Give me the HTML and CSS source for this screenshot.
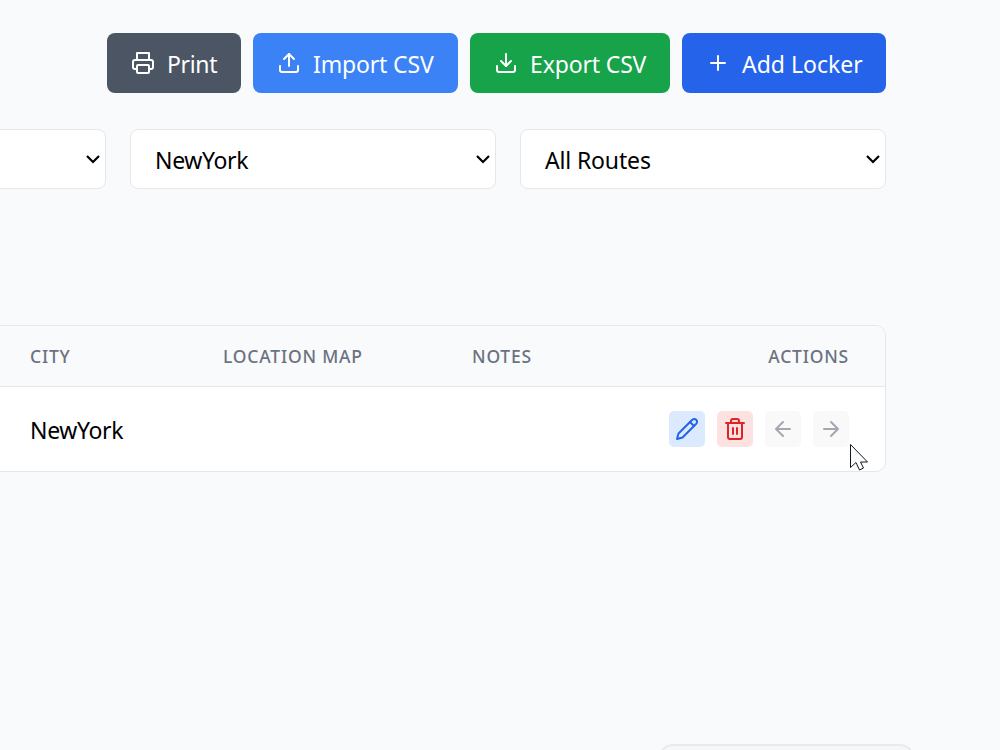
FILE: index.html
```html
<!DOCTYPE html>
<html lang="en">

<head>
    <meta charset="utf-8">
    <title>Lockers</title>
    <link rel="stylesheet" href="styles.css">
</head>

<body>
<div class="page">
    <div class="toolbar">
        <button class="btn btn-print">
            <svg class="icon" viewBox="0 0 24 24">
                <polyline points="6 9 6 2 18 2 18 9"/>
                <path d="M6 18H4a2 2 0 0 1-2-2v-5a2 2 0 0 1 2-2h16a2 2 0 0 1 2 2v5a2 2 0 0 1-2 2h-2"/>
                <rect x="6" y="14" width="12" height="8" rx="1"/>
            </svg>
            <span class="label">Print</span>
        </button>
        <button class="btn btn-import">
            <svg class="icon" viewBox="0 0 24 24">
                <path d="M21 15v4a2 2 0 0 1-2 2H5a2 2 0 0 1-2-2v-4"/>
                <polyline points="17 8 12 3 7 8"/>
                <line x1="12" y1="3" x2="12" y2="15"/>
            </svg>
            <span class="label">Import CSV</span>
        </button>
        <button class="btn btn-export">
            <svg class="icon" viewBox="0 0 24 24">
                <path d="M21 15v4a2 2 0 0 1-2 2H5a2 2 0 0 1-2-2v-4"/>
                <polyline points="7 10 12 15 17 10"/>
                <line x1="12" y1="15" x2="12" y2="3"/>
            </svg>
            <span class="label">Export CSV</span>
        </button>
        <button class="btn btn-add">
            <svg class="icon" viewBox="0 0 24 24">
                <path d="M5 12h14M12 5v14"/>
            </svg>
            <span class="label">Add Locker</span>
        </button>
    </div>

    <div class="filters">
        <div class="select">
            <span></span>
            <svg class="chevron" viewBox="0 0 16 10"><path d="M2 2l6 6 6-6"/></svg>
        </div>
        <div class="select">
            <span class="label">NewYork</span>
            <svg class="chevron" viewBox="0 0 16 10"><path d="M2 2l6 6 6-6"/></svg>
        </div>
        <div class="select">
            <span class="label label-routes">All Routes</span>
            <svg class="chevron" viewBox="0 0 16 10"><path d="M2 2l6 6 6-6"/></svg>
        </div>
    </div>

    <div class="table">
        <div class="row head">
            <span class="th">City</span>
            <span class="th">Location Map</span>
            <span class="th">Notes</span>
            <span class="th th-actions">Actions</span>
        </div>
        <div class="row">
            <span class="label">NewYork</span>
            <span></span>
            <span></span>
            <div class="actions">
                <button class="action edit">
                    <svg class="icon" viewBox="0 0 24 24">
                        <path d="M17 3a2.85 2.83 0 1 1 4 4L7.5 20.5 2 22l1.5-5.5Z"/>
                        <path d="m15 5 4 4"/>
                    </svg>
                </button>
                <button class="action delete">
                    <svg class="icon" viewBox="0 0 24 24">
                        <path d="M3 6h18"/>
                        <path d="M19 6v14c0 1-1 2-2 2H7c-1 0-2-1-2-2V6"/>
                        <path d="M8 6V4c0-1 1-2 2-2h4c1 0 2 1 2 2v2"/>
                        <path d="M10 11v6M14 11v6"/>
                    </svg>
                </button>
                <button class="action move">
                    <svg class="icon" viewBox="0 0 24 24">
                        <path d="m12 19-7-7 7-7M19 12H5"/>
                    </svg>
                </button>
                <button class="action move">
                    <svg class="icon" viewBox="0 0 24 24">
                        <path d="M5 12h14M12 5l7 7-7 7"/>
                    </svg>
                </button>
            </div>
        </div>
    </div>
</div>

<div class="popup"></div>
<svg class="cursor" viewBox="0 0 20 28">
    <path d="M1.5 1.5v23l5.5-5 3.5 7.5 4-2-3-6h7z"/>
</svg>
</body>

</html>
```

FILE: styles.css
```css
* {
    margin: 0;
    padding: 0;
    box-sizing: border-box;
}

body {
    height: 750px;
    overflow: hidden;
    position: relative;
    background: #f9fafc;
    color: #000;
    font-family: "Noto Sans", "Open Sans", sans-serif;
    font-size: 23px;
    line-height: 36px;
}

button {
    border: none;
    font: inherit;
    color: inherit;
}

/* the page is wider than the window, it runs off to the left */
.page {
    width: 1146px;
    margin-left: -260px;
    padding-top: 33px;
}

.toolbar {
    display: flex;
    justify-content: flex-end;
    gap: 12px;
}

.btn {
    display: flex;
    align-items: center;
    gap: 12px;
    height: 60px;
    padding: 0 24px;
    border-radius: 8px;
    color: #fff;
    white-space: nowrap;
}

.btn-print {
    width: 134px;
    background: #4b5563;
}

.btn-import {
    width: 205px;
    background: #3b82f6;
}

.btn-export {
    width: 200px;
    background: #16a34a;
}

.btn-add {
    width: 204px;
    background: #2563eb;
}

.label {
    padding-top: 2px;
    letter-spacing: -0.35px;
}

.btn-import .label,
.btn-export .label,
.label-routes {
    letter-spacing: -0.15px;
}

.btn-add .label {
    letter-spacing: 0;
}

.icon {
    flex: none;
    width: 24px;
    height: 24px;
    fill: none;
    stroke: currentColor;
    stroke-width: 2;
    stroke-linecap: round;
    stroke-linejoin: round;
}

.filters {
    display: grid;
    grid-template-columns: repeat(3, 366px);
    justify-content: end;
    gap: 24px;
    margin-top: 36px;
}

.select {
    display: flex;
    align-items: center;
    justify-content: space-between;
    height: 60px;
    padding: 0 4px 0 24px;
    background: #fff;
    border: 1px solid #e5e7eb;
    border-radius: 8px;
}

.chevron {
    width: 16px;
    height: 10px;
    fill: none;
    stroke: #000;
    stroke-width: 2.2;
}

.table {
    margin-top: 136px;
    background: #fff;
    border: 1px solid #e5e7eb;
    border-radius: 10px;
    overflow: hidden;
}

.row {
    display: grid;
    grid-template-columns: 193px 249px 1fr 180px;
    align-items: center;
    height: 84px;
    padding: 0 36px 0 289px;
}

.head {
    height: 61px;
    background: #f9fafc;
    border-bottom: 1px solid #e5e7eb;
}

.th {
    color: #6b7280;
    font-size: 17.5px;
    font-weight: 550;
    letter-spacing: 0.8px;
    text-transform: uppercase;
}

.th-actions {
    text-align: right;
}

.actions {
    display: flex;
    justify-content: flex-end;
    gap: 12px;
}

.action {
    display: flex;
    align-items: center;
    justify-content: center;
    width: 36px;
    height: 36px;
    border-radius: 5px;
}

.edit {
    background: #dbeafe;
    color: #2563eb;
}

.delete {
    background: #fee2e2;
    color: #dc2626;
}

.move {
    background: #f9f9f9;
    color: #a3a8b0;
}

.popup {
    position: absolute;
    left: 659px;
    top: 744px;
    width: 255px;
    height: 40px;
    background: #f7f7f7;
    border: 2px solid #e8eaeb;
    border-radius: 14px;
}

.cursor {
    position: absolute;
    left: 849px;
    top: 443px;
    width: 20px;
    height: 28px;
    fill: #fff;
    stroke: #111827;
    stroke-width: 1;
}
```
